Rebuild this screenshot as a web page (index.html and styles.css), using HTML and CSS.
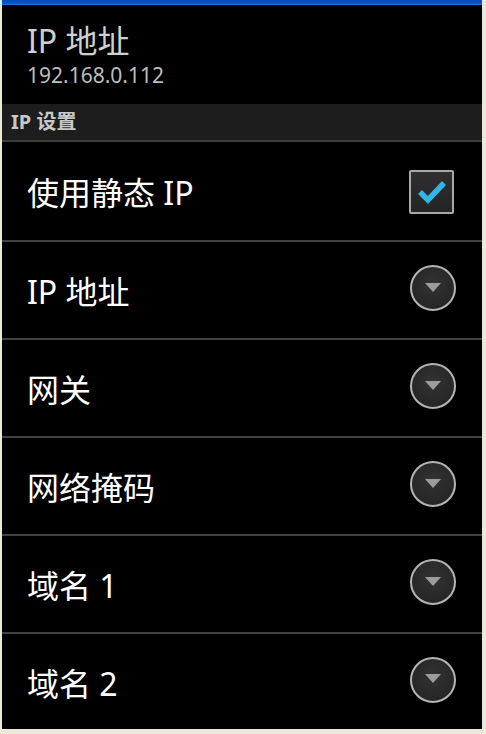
FILE: index.html
```html
<!DOCTYPE html>
<html lang="zh-CN">
<head>
    <meta charset="UTF-8">
    <meta name="viewport" content="width=device-width, initial-scale=1.0">
    <title>IP 设置</title>
    <link rel="stylesheet" href="styles.css">
</head>
<body>
    <div class="screen">
        <div class="status-bar"></div>

        <div class="header">
            <div class="header-title">IP 地址</div>
            <div class="header-sub">192.168.0.112</div>
        </div>

        <div class="section">IP 设置</div>

        <div class="list">
            <div class="row">
                <span class="row-label">使用静态 IP</span>
                <span class="checkbox checked">
                    <svg width="30" height="26" viewBox="0 0 30 26">
                        <path d="M3 13 L11 21 L27 4" fill="none" stroke="#31b4e6" stroke-width="5.5" stroke-linejoin="miter"/>
                    </svg>
                </span>
            </div>
            <div class="row">
                <span class="row-label">IP 地址</span>
                <span class="spinner"></span>
            </div>
            <div class="row">
                <span class="row-label">网关</span>
                <span class="spinner"></span>
            </div>
            <div class="row">
                <span class="row-label">网络掩码</span>
                <span class="spinner"></span>
            </div>
            <div class="row">
                <span class="row-label">域名 1</span>
                <span class="spinner"></span>
            </div>
            <div class="row">
                <span class="row-label">域名 2</span>
                <span class="spinner"></span>
            </div>
        </div>
    </div>
</body>
</html>
```

FILE: styles.css
```css
html, body {
    margin: 0;
    padding: 0;
    background: #ece9d8;
}
body {
    font-family: "Noto Sans", "Noto Sans CJK SC", sans-serif;
    width: 486px;
    height: 734px;
    overflow: hidden;
}
.screen {
    margin-left: 2px;
    width: 480px;
    height: 729px;
    background: #000;
    display: flex;
    flex-direction: column;
    overflow: hidden;
}
.status-bar {
    flex-shrink: 0;
    height: 5px;
    margin-left: -2px;
    width: 482px;
    background: linear-gradient(#0a48b8, #0c55cc 70%, #3a7ae0);
}
.header {
    flex-shrink: 0;
    height: 99px;
    box-sizing: border-box;
    padding: 15px 0 0 25px;
}
.header-title {
    font-size: 32px;
    line-height: 42px;
    color: #cfcfcf;
}
.header-sub {
    font-size: 21px;
    line-height: 26px;
    color: #bdbdbd;
}
.section {
    flex-shrink: 0;
    height: 38px;
    box-sizing: border-box;
    background: #1d1d1d;
    border-bottom: 2px solid #3c3c3c;
    padding-left: 9px;
    font-size: 20px;
    font-weight: bold;
    line-height: 36px;
    color: #c8c8c8;
}
.list {
    flex: 1;
    display: flex;
    flex-direction: column;
}
.row {
    flex-shrink: 0;
    height: 98px;
    box-sizing: border-box;
    border-bottom: 2px solid #424242;
    display: flex;
    align-items: center;
    justify-content: space-between;
    padding: 0 26px 0 25px;
}
.row:first-child {
    height: 100px;
}
.row:last-child {
    flex: 1;
    border-bottom: none;
}
.row-label {
    font-size: 32px;
    color: #fff;
}
.checkbox {
    width: 45px;
    height: 44px;
    margin: 2px 2px 0 0;
    box-sizing: border-box;
    border: 2px solid #a8a8a8;
    border-radius: 2px;
    background: linear-gradient(#2f2f2f, #242424);
    display: flex;
    align-items: center;
    justify-content: center;
}
.spinner {
    width: 46px;
    height: 46px;
    margin-top: -4px;
    box-sizing: border-box;
    border: 2px solid #b4b4b4;
    border-radius: 50%;
    background: radial-gradient(circle at 50% 40%, #333 0%, #262626 70%);
    display: flex;
    align-items: center;
    justify-content: center;
}
.spinner::after {
    content: "";
    width: 0;
    height: 0;
    margin-top: -2px;
    border-left: 8px solid transparent;
    border-right: 8px solid transparent;
    border-top: 9px solid #9c9c9c;
}
```
